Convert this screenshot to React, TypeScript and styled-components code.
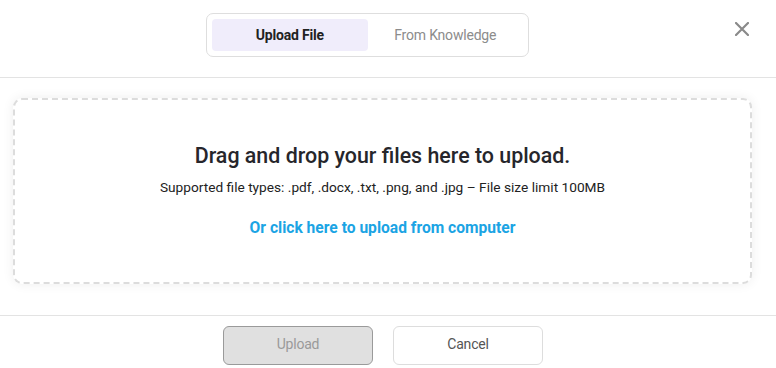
import React, { useState } from "react";
import styled, { createGlobalStyle } from "styled-components";

const Global = createGlobalStyle`
  html, body { margin: 0; padding: 0; background: #ffffff; }
  body { font-family: Roboto, "Liberation Sans", Arial, sans-serif; }
  * { box-sizing: border-box; }
`;

const Modal = styled.div`
  width: 776px;
  height: 368px;
  display: flex;
  flex-direction: column;
  background: #fff;
  overflow: hidden;
`;

const Header = styled.div`
  height: 78px;
  display: flex;
  align-items: flex-start;
  padding: 13px 27px 0 0;
  border-bottom: 1px solid #e3e3e3;
`;

const TabArea = styled.div`
  flex: 1;
  display: flex;
  justify-content: center;
`;

const Tabs = styled.div`
  width: 323px;
  height: 44px;
  display: flex;
  padding: 5px;
  border: 1px solid #dedede;
  border-radius: 7px;
`;

const Tab = styled.button<{ $active?: boolean }>`
  flex: 1;
  border: none;
  border-radius: 4px;
  background: ${(p) => (p.$active ? "#f0edfb" : "transparent")};
  color: ${(p) => (p.$active ? "#222" : "#8c8c8c")};
  font-family: Roboto, "Liberation Sans", sans-serif;
  font-size: 14px;
  font-weight: ${(p) => (p.$active ? 700 : 400)};
  letter-spacing: -0.2px;
  cursor: pointer;
  padding: 0;
`;

const Close = styled.button`
  width: 14px;
  height: 14px;
  margin-top: 9px;
  padding: 0;
  border: none;
  background: none;
  cursor: pointer;
  display: flex;
`;

const Body = styled.div`
  flex: 1;
  padding: 20px 24px 31px 13px;
`;

const Drop = styled.div`
  height: 186px;
  border: 2px dashed #dcdcdc;
  border-radius: 9px;
  box-shadow: 0 0 12px rgba(0, 0, 0, 0.07);
  display: flex;
  flex-direction: column;
  align-items: center;
  padding-top: 43px;
  background: #fff;
`;

const Title = styled.div`
  font-size: 21.4px;
  font-weight: 500;
  color: #26262b;
  line-height: 26px;
`;

const Sub = styled.div`
  margin-top: 10px;
  font-size: 13.7px;
  color: #222;
  line-height: 16px;
`;

const Link = styled.a`
  margin-top: 24px;
  font-size: 15.6px;
  font-weight: 700;
  color: #1ba4e4;
  line-height: 18px;
  cursor: pointer;
  text-decoration: none;
`;

const Footer = styled.div`
  border-top: 1px solid #e3e3e3;
  height: 53px;
  display: flex;
  justify-content: center;
  align-items: flex-start;
  gap: 20px;
  padding: 10px 10px 0 0;
`;

const Btn = styled.button<{ $disabled?: boolean }>`
  width: 150px;
  height: 39px;
  border-radius: 6px;
  border: 1px solid ${(p) => (p.$disabled ? "#9a9a9a" : "#dddddd")};
  background: ${(p) => (p.$disabled ? "#e0e0e0" : "#fff")};
  color: ${(p) => (p.$disabled ? "#9a9a9a" : "#555")};
  font-family: Roboto, "Liberation Sans", sans-serif;
  font-size: 14px;
  letter-spacing: -0.2px;
  padding: 0 0 3px;
  cursor: pointer;
`;

export default function App() {
  const [tab, setTab] = useState(0);
  return (
    <>
      <Global />
      <Modal>
        <Header>
          <TabArea>
            <Tabs>
              <Tab $active={tab === 0} onClick={() => setTab(0)}>Upload File</Tab>
              <Tab $active={tab === 1} onClick={() => setTab(1)}>From Knowledge</Tab>
            </Tabs>
          </TabArea>
          <Close aria-label="Close">
            <svg width="14" height="14" viewBox="0 0 14 14">
              <path d="M1 1L13 13M13 1L1 13" stroke="#8a8a8a" strokeWidth="2.2" strokeLinecap="round" />
            </svg>
          </Close>
        </Header>
        <Body>
          <Drop>
            <Title>Drag and drop your files here to upload.</Title>
            <Sub>Supported file types: .pdf, .docx, .txt, .png, and .jpg – File size limit 100MB</Sub>
            <Link>Or click here to upload from computer</Link>
          </Drop>
        </Body>
        <Footer>
          <Btn $disabled>Upload</Btn>
          <Btn>Cancel</Btn>
        </Footer>
      </Modal>
    </>
  );
}
